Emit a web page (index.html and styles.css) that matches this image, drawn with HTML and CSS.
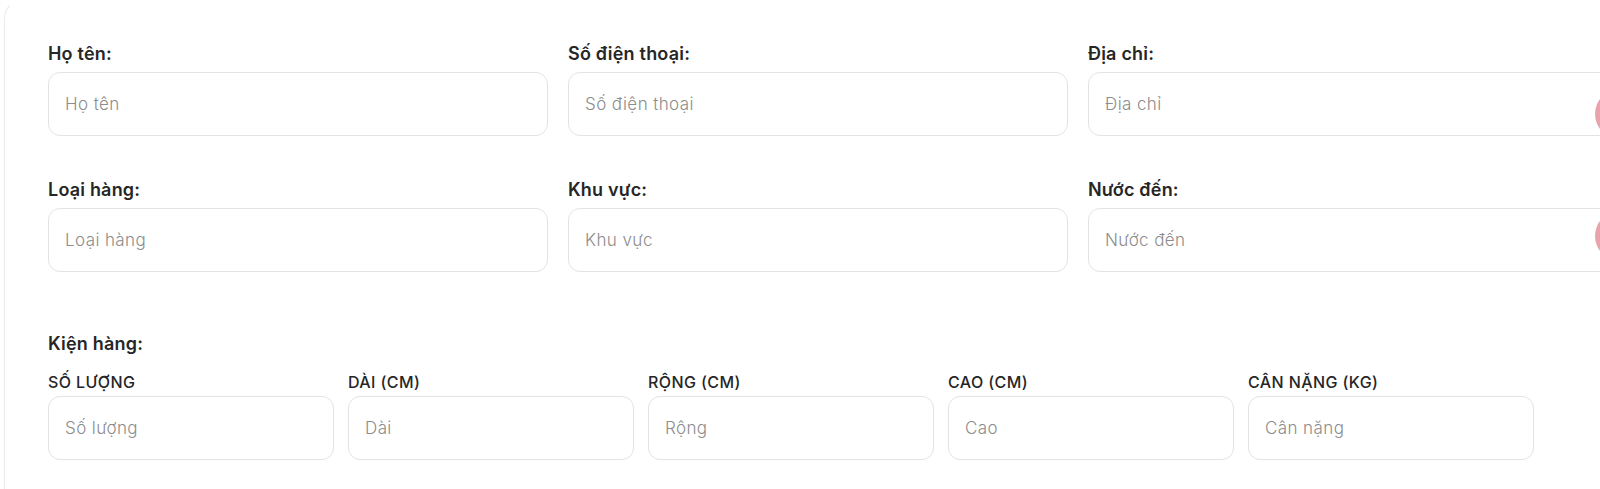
FILE: index.html
```html
<!DOCTYPE html>
<html lang="vi">
<head>
<meta charset="utf-8">
<title>Form</title>
<link rel="stylesheet" href="styles.css">
</head>
<body>
<div class="card">
  <div class="grid3">
    <div class="field">
      <label class="label">Họ tên:</label>
      <input class="input" type="text" placeholder="Họ tên">
    </div>
    <div class="field">
      <label class="label">Số điện thoại:</label>
      <input class="input" type="text" placeholder="Số điện thoại">
    </div>
    <div class="field">
      <label class="label">Địa chỉ:</label>
      <input class="input" type="text" placeholder="Địa chỉ">
    </div>
    <div class="field">
      <label class="label">Loại hàng:</label>
      <input class="input" type="text" placeholder="Loại hàng">
    </div>
    <div class="field">
      <label class="label">Khu vực:</label>
      <input class="input" type="text" placeholder="Khu vực">
    </div>
    <div class="field">
      <label class="label">Nước đến:</label>
      <input class="input" type="text" placeholder="Nước đến">
    </div>
  </div>

  <div class="package">
    <div class="label package-title">Kiện hàng:</div>
    <div class="grid5">
      <div class="field">
        <label class="sublabel">SỐ LƯỢNG</label>
        <input class="input" type="text" placeholder="Số lượng">
      </div>
      <div class="field">
        <label class="sublabel">DÀI (CM)</label>
        <input class="input" type="text" placeholder="Dài">
      </div>
      <div class="field">
        <label class="sublabel">RỘNG (CM)</label>
        <input class="input" type="text" placeholder="Rộng">
      </div>
      <div class="field">
        <label class="sublabel">CAO (CM)</label>
        <input class="input" type="text" placeholder="Cao">
      </div>
      <div class="field">
        <label class="sublabel">CÂN NẶNG (KG)</label>
        <input class="input" type="text" placeholder="Cân nặng">
      </div>
    </div>
  </div>
  <div class="float-btn float-btn-1"></div>
  <div class="float-btn float-btn-2"></div>
</div>
</body>
</html>
```

FILE: styles.css
```css
html, body {
  margin: 0;
  padding: 0;
  background: #ffffff;
  overflow: hidden;
  width: 1600px;
  height: 489px;
}

body {
  font-family: "Inter", "Noto Sans", sans-serif;
  color: #222222;
}

.card {
  position: relative;
  box-sizing: border-box;
  width: 1596px;
  height: 489px;
  margin: 0 0 0 4px;
  padding: 41px 0 0 43px;
  background: #ffffff;
  border: 1px solid #ebebeb;
  border-top-color: transparent;
  border-right: none;
  border-bottom: none;
  border-radius: 18px 0 0 0;
  overflow: hidden;
}

.grid3 {
  display: grid;
  grid-template-columns: 500px 500px 560px;
  column-gap: 20px;
  row-gap: 42px;
}

.field {
  display: flex;
  flex-direction: column;
}

.label {
  display: block;
  font-size: 18px;
  font-weight: 600;
  line-height: 24px;
  letter-spacing: 0.2px;
  color: #262626;
  margin-bottom: 6px;
}

.sublabel {
  display: block;
  font-size: 16px;
  font-weight: 500;
  line-height: 20px;
  letter-spacing: 0.4px;
  color: #262626;
  margin-bottom: 4px;
}

.input {
  box-sizing: border-box;
  height: 64px;
  width: 100%;
  border: 1px solid #e3e3e3;
  border-radius: 12px;
  padding: 0 16px;
  font-family: inherit;
  font-size: 17px;
  font-weight: 300;
  letter-spacing: 0.4px;
  color: #222222;
  background: #ffffff;
  outline: none;
}

.input::placeholder {
  color: #8c8c8c;
}

.package {
  margin-top: 60px;
}

.package-title {
  margin-bottom: 16px;
}

.grid5 {
  display: grid;
  grid-template-columns: repeat(5, 286px);
  column-gap: 14px;
}

.float-btn {
  position: absolute;
  width: 50px;
  height: 50px;
  border-radius: 50%;
  background: #e8a3ab;
  left: 1590px;
}

.float-btn-1 {
  top: 88px;
}

.float-btn-2 {
  top: 210px;
}
```
